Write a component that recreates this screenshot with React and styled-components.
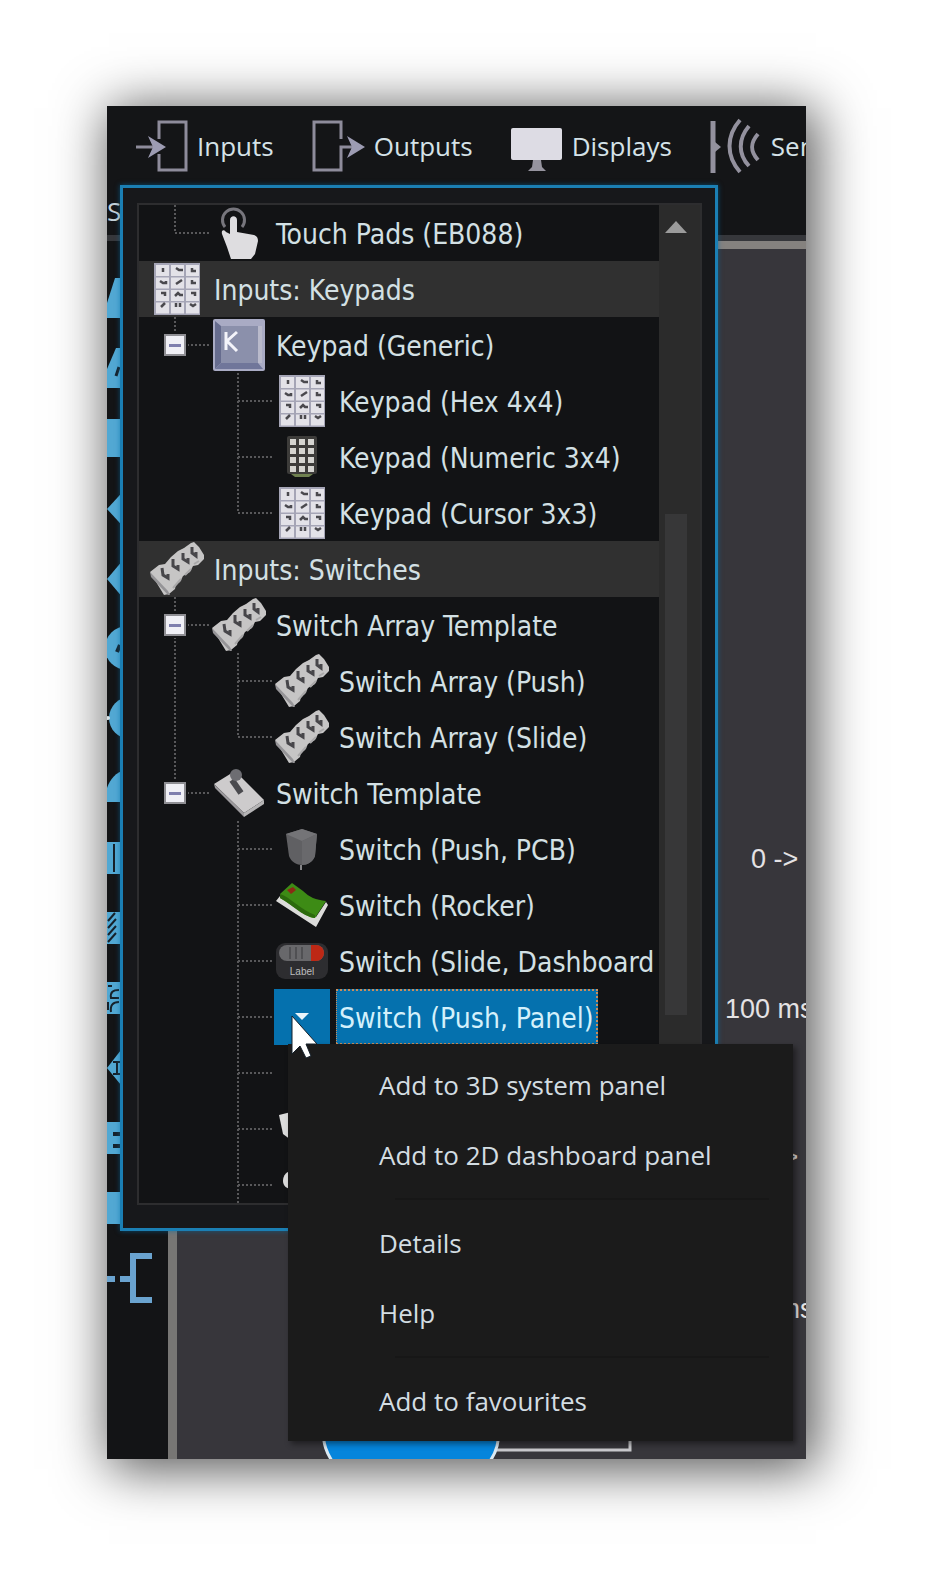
import { useState } from "react";
import styled, { createGlobalStyle, css } from "styled-components";

const GlobalStyle = createGlobalStyle`
  * {
    box-sizing: border-box;
  }

  body {
    margin: 0;
    background: #ffffff;
    font-family: "Open Sans", "Noto Sans", sans-serif;
  }

  button {
    border: none;
    padding: 0;
    background: none;
    color: inherit;
    font: inherit;
    text-align: left;
    cursor: pointer;
  }
`;

const Page = styled.main`
  padding: 106px 134px 118px 107px;
`;

const Frame = styled.div`
  position: relative;
  display: grid;
  background: #141517;
  box-shadow: 6px 6px 50px 4px rgba(0, 0, 0, 0.68);
`;

/* the window and the popup share one grid cell, the popup lies on top */
const Window = styled.div`
  grid-area: 1 / 1;
  min-width: 0;
  display: flex;
  flex-direction: column;
  overflow: hidden;
`;

const Toolbar = styled.nav`
  display: flex;
  gap: 38px;
  height: 80px;
  padding-left: 29px;
`;

const ToolbarButton = styled.button`
  display: flex;
  align-items: center;
  gap: 9px;
  flex: none;
  color: #d5e2e8;
  font-size: 26px;
  font-weight: 500;
  white-space: nowrap;

  svg {
    flex: none;
  }
`;

const TabStrip = styled.div`
  height: 49px;
  color: #c3d0d8;
  font-size: 26px;
  line-height: 50px;
`;

const Workspace = styled.div`
  flex: 1;
  display: flex;
  border-top: 6px solid #36373b;
`;

const Toolbox = styled.div`
  width: 61px;
  padding-top: 22px;
  display: flex;
  flex-direction: column;
  background: #131416;
`;

const ToolButton = styled.button`
  height: 70px;

  svg {
    display: block;
  }
`;

const Canvas = styled.div`
  position: relative;
  flex: 1;
  overflow: hidden;
  background: #37363b;
  border-top: 8px solid #85827f;
  border-left: 9px solid #777674;
`;

const CanvasLabel = styled.span`
  position: absolute;
  left: ${(p) => p.$x}px;
  top: ${(p) => p.$y}px;
  color: #e4e2e4;
  font-family: "Liberation Sans", Arial, sans-serif;
  font-size: 27px;
  line-height: 32px;
  white-space: nowrap;
`;

const CanvasShape = styled.svg`
  position: absolute;
  left: 144px;
  bottom: 0;
`;

const PopupLayer = styled.div`
  grid-area: 1 / 1;
  min-width: 0;
  z-index: 1;
  padding: 79px 88px 228px 13px;
`;

const Popup = styled.div`
  padding: 15px 13px 23px 14px;
  background: #17181b;
  border: 3px solid #1b7fb4;
  box-shadow: 0 0 5px rgba(0, 110, 170, 0.6);
`;

const TreePane = styled.div`
  display: flex;
  border: 2px solid #2d2d2f;
  background: #121315;
`;

const Tree = styled.ul`
  flex: 1;
  min-width: 0;
  max-height: 998px;
  margin: 0;
  padding: 0;
  overflow: hidden;
  list-style: none;
  color: #d3e0e4;
  font-family: "DejaVu Sans Condensed", "DejaVu Sans", sans-serif;
  font-size: 28px;
`;

const Row = styled.li`
  display: flex;
  align-items: center;
  height: 56px;
  ${(p) =>
    p.$heading &&
    css`
      padding-left: 10px;
      background: #303030;
    `}
`;

const dots = (direction) =>
  `repeating-linear-gradient(${direction}, #58585a 0 2px, transparent 2px 4px)`;

const trunkHeight = { full: "100%", half: "50%", none: "0" };

const Guide = styled.span`
  flex: none;
  display: flex;
  align-items: center;
  justify-content: flex-end;
  width: ${(p) => (p.$root ? 72 : 63)}px;
  height: 100%;
  padding-right: 25px;
  background-image: ${dots("to bottom")}, ${dots("to right")};
  background-repeat: no-repeat;
  background-position: right 35px top, right 2px center;
  background-size: 2px ${(p) => trunkHeight[p.$trunk]},
    ${(p) => (p.$branch ? "34px 2px" : "0 0")};
`;

const Expander = styled.button`
  display: flex;
  align-items: center;
  justify-content: center;
  width: 22px;
  height: 22px;
  border: 2px solid #8f8f94;
  outline: 2px solid #121315;
  background: #f0f0f6;

  &::before {
    content: "";
    width: 12px;
    height: ${(p) => (p["aria-expanded"] ? 3 : 12)}px;
    background: #7f7fae;
  }
`;

const IconCell = styled.span`
  flex: none;
  display: flex;
  align-items: center;
  justify-content: center;
  width: 56px;
  height: 56px;
  background: ${(p) => (p.$selected ? "#0571ae" : "none")};
`;

const RowLabel = styled.button`
  flex: none;
  height: 56px;
  margin-left: 6px;
  padding: 2px 2px 0;
  line-height: 52px;
  border: 2px dotted transparent;
  border-left-width: 1px;
  white-space: nowrap;
  ${(p) =>
    p.$selected &&
    css`
      background: #0571ae;
      border-color: #c98d5c;
      color: #d4f0fb;
    `}
`;

const ScrollBar = styled.div`
  width: 41px;
  display: flex;
  flex-direction: column;
  padding-left: 6px;
  background: #2b2b2b;
`;

const ScrollUp = styled.button`
  width: 22px;
  height: 309px;
  padding-top: 16px;

  svg {
    display: block;
    height: 293px;
  }
`;

const ScrollThumb = styled.div`
  width: 22px;
  height: 501px;
  background: #373738;
`;

const Menu = styled.div`
  position: absolute;
  z-index: 2;
  top: 938px;
  left: 181px;
  right: 13px;
  display: flex;
  flex-direction: column;
  padding: 6px 0 5px;
  background: #1b1b1b;
  box-shadow: 3px 3px 6px rgba(0, 0, 0, 0.45);
`;

const MenuItem = styled.button`
  height: 70px;
  padding-left: 91px;
  color: #d3dde2;
  font-size: 26px;
  font-weight: 500;
  line-height: 66px;
`;

const MenuDivider = styled.hr`
  width: 374px;
  height: 2px;
  margin: 8px 24px 8px auto;
  border: none;
  background: #171717;
`;

const Pointer = styled.svg`
  position: absolute;
  z-index: 3;
  top: 908px;
  left: 183px;
`;

function InputIcon() {
  return (
    <svg width="52" height="52" viewBox="0 0 52 52" fill="none" stroke="#8e8c9b" strokeWidth="3">
      <path d="M23 19V2h27v48H23V34" />
      <path d="M0 27h22" />
      <path d="M12 16l18 11-18 11 5-11z" fill="#9d9cb3" stroke="none" />
    </svg>
  );
}

function OutputIcon() {
  return (
    <svg width="53" height="52" viewBox="0 0 53 52" fill="none" stroke="#8e8c9b" strokeWidth="3">
      <path d="M29 19V2H2v48h27V27h12" />
      <path d="M35 16l18 11-18 11 5-11z" fill="#9d9cb3" stroke="none" />
    </svg>
  );
}

function DisplayIcon() {
  return (
    <svg width="52" height="52" viewBox="0 0 52 52">
      <rect y="8" width="51" height="32" rx="2" fill="#dddce4" />
      <path d="M22 40h8l1 7 4 4H17l4-4z" fill="#96949f" />
    </svg>
  );
}

function SensorIcon() {
  return (
    <svg width="52" height="58" viewBox="0 0 52 58" fill="none" stroke="#93919e" strokeWidth="4">
      <path d="M3 4v52" strokeWidth="5" />
      <path d="M5 25l6 5-6 5z" fill="#93919e" stroke="none" />
      <path d="M30 3C16 19 16 39 30 55M39 9C28 22 28 37 39 49M48 17c-8 9-8 17 0 26" />
    </svg>
  );
}

function TouchIcon() {
  return (
    <svg width="40" height="54" viewBox="0 0 40 54">
      <path d="M6 21a11 11 0 1 1 17 0" fill="none" stroke="#77767d" strokeWidth="3" />
      <path
        d="M11 14c0-5 7-5 7 0v12l17 3c3 1 4 3 4 6l-3 13-4 5H12L8 41 3 28c-1-4 2-5 4-2l4 2z"
        fill="#dedde0"
      />
    </svg>
  );
}

const keyMarks = [
  "M9 5v4", "M22 5l3 2h4", "M38 5v3h4",
  "M6 18l3 2h3v-2", "M22 21l3-2 3-2", "M38 17v3h4",
  "M7 30h4v3", "M21 33l3-3 2 2h3", "M37 30h4v3",
  "M7 44l4-4", "M22 40v4m4-4v4", "M36 41l3 2 3-2",
];

function KeyGridIcon() {
  return (
    <svg width="46" height="52" viewBox="0 0 46 52">
      <rect width="46" height="52" fill="#a5a5b6" />
      {keyMarks.map((mark, i) => (
        <g key={mark}>
          <rect
            x={2 + (i % 3) * 15}
            y={2 + Math.floor(i / 3) * 12.5}
            width="13"
            height="11"
            fill="#e3e2e8"
          />
          <path d={mark} fill="none" stroke="#4a494e" strokeWidth="2.5" />
        </g>
      ))}
    </svg>
  );
}

function KeyIcon() {
  return (
    <svg width="52" height="52" viewBox="0 0 52 52">
      <rect width="52" height="52" rx="2" fill="#a9abc4" />
      <path d="M2 2l6 5v37l-6 6z" fill="#666c8e" />
      <path d="M2 50l6-6h37l5 6z" fill="#70769a" />
      <path d="M8 7h37v37H8z" fill="#8b90ab" />
      <path d="M45 7h4v37h-4z" fill="#b9bacb" />
      <path d="M13 13v18M24 13l-10 9 10 10" fill="none" stroke="#f4f4fa" strokeWidth="3" />
    </svg>
  );
}

function NumPadIcon() {
  return (
    <svg width="30" height="42" viewBox="0 0 30 42">
      <rect width="30" height="38" rx="2" fill="#3d3c3a" />
      <path d="M4 38h22l-4 3H8z" fill="#6f8150" />
      {[0, 1, 2, 3].map((r) =>
        [0, 1, 2].map((c) => (
          <rect key={`${r}${c}`} x={3 + c * 9} y={3 + r * 9} width="6" height="6" fill="#d5d4d0" />
        ))
      )}
    </svg>
  );
}

function SwitchArrayIcon() {
  return (
    <svg width="54" height="56" viewBox="0 0 54 56">
      <path
        d="M0 31l9-7 6-1 6-7 7-6 6-3 7-5 3-1 5 5 5 8v4l-6 6-5 1-3 6-7 4-3 6-4 2-1 5-6 5-5 1z"
        fill="#c6c5c5"
      />
      <path d="M0 31l18 19 2 4H18L1 36z" fill="#959497" />
      <path d="M31 38l-8 9M41 28l-6 6M49 20l-5 3" stroke="#a9a8a9" strokeWidth="2" />
      <path
        d="M12 27l1 7 5 3v-4M23 18v7l5 3v-4M33 12v6l5 3v-4M42 6v6l4 3v-4"
        fill="none"
        stroke="#47464a"
        strokeWidth="3"
      />
    </svg>
  );
}

function ToggleIcon() {
  return (
    <svg width="52" height="50" viewBox="0 0 52 50">
      <path d="M1 16L22 3l29 29-20 13z" fill="#cdcbcc" />
      <path d="M1 16l30 29v4L2 20z" fill="#9c9a9d" />
      <path d="M31 45l20-13v4L31 49z" fill="#b6b5b6" />
      <path d="M19 12l9 13" stroke="#4a4a4e" strokeWidth="6" />
      <circle cx="23" cy="7" r="6" fill="#6d6d72" />
    </svg>
  );
}

function PcbIcon() {
  return (
    <svg width="34" height="42" viewBox="0 0 34 42">
      <path d="M1 6l16-5 15 5-2 22c-2 6-8 9-13 9S6 34 4 28z" fill="#606063" />
      <path d="M1 6l16-5 15 5-15 7z" fill="#747477" />
      <path d="M17 13l15-7-2 22c-2 6-8 9-13 9z" fill="#69696c" />
      <path d="M16 37v5" stroke="#858588" strokeWidth="2" />
    </svg>
  );
}

function RockerIcon() {
  return (
    <svg width="52" height="46" viewBox="0 0 52 46">
      <path d="M0 19l4-5 36 21L50 20l2 3-12 22z" fill="#dcdcda" />
      <path d="M4 12L16 1l11 8c6 6 13 9 23 10L39 36C31 36 24 28 4 16z" fill="#3d8b15" />
      <path d="M4 12c10 3 21 16 35 21v3C25 34 16 22 4 16z" fill="#2c6a0d" />
      <path d="M11 8l6-3 3 3-5 4z" fill="#8c2a15" />
    </svg>
  );
}

function SlideIcon() {
  return (
    <svg width="52" height="36" viewBox="0 0 52 36">
      <rect width="52" height="36" rx="9" fill="#2d2d30" />
      <rect x="3" y="2" width="45" height="16" rx="8" fill="#68686b" />
      <path d="M35 2h5a8 8 0 0 1 0 16h-5z" fill="#bd2815" />
      <path d="M14 4v12M20 4v12M26 4v12" stroke="#505053" strokeWidth="2" />
      <text x="26" y="32" textAnchor="middle" fill="#bdbdbd" fontSize="10" fontFamily="Liberation Sans">
        Label
      </text>
    </svg>
  );
}

function DropIcon() {
  return (
    <svg width="14" height="8" viewBox="0 0 14 8">
      <path d="M0 0h14L7 7z" fill="#e9f4fa" />
    </svg>
  );
}

function PartIcon() {
  return (
    <svg width="46" height="40" viewBox="0 0 46 40">
      <path d="M0 6l12-3 30 6-4 20-26 2-8-6z" fill="#dddddd" />
    </svg>
  );
}

function KnobIcon() {
  return (
    <svg width="38" height="28" viewBox="0 0 38 28">
      <path d="M0 10C0 4 4 0 9 0h22v18H9c-5 0-9-3-9-8z" fill="#dddddd" />
    </svg>
  );
}

const blue = "#52a8d3";
const dark = "#17212a";

const tools = [
  { name: "Input", art: <path d="M8 15h36L32 55H0V40z" fill={blue} /> },
  {
    name: "Output",
    art: (
      <>
        <path d="M9 15h36L34 55H0V36z" fill={blue} />
        <path d="M12 34L9 43" stroke={dark} strokeWidth="3" />
      </>
    ),
  },
  { name: "Delay", art: <path d="M0 16h44v38H0z" fill={blue} /> },
  { name: "Decision", art: <path d="M0 36l22-24 22 24-22 24z" fill={blue} /> },
  { name: "Switch", art: <path d="M0 36l22-26 22 26-22 26z" fill={blue} /> },
  {
    name: "Connection",
    art: (
      <>
        <circle cx="20" cy="35" r="22" fill={blue} />
        <path d="M13 32l-3 7" stroke={dark} strokeWidth="4" />
      </>
    ),
  },
  {
    name: "Goto",
    art: (
      <>
        <circle cx="23" cy="35" r="21" fill={blue} />
        <circle cx="1" cy="35" r="2" fill="#d9e3e8" />
      </>
    ),
  },
  { name: "Loop", art: <path d="M0 49V35C3 26 9 19 18 17h26v32z" fill={blue} /> },
  {
    name: "Macro",
    art: (
      <>
        <path d="M0 19h44v32H0z" fill={blue} />
        <path d="M7 21v28" stroke={dark} strokeWidth="2" />
      </>
    ),
  },
  {
    name: "Component macro",
    art: (
      <>
        <path d="M0 19h44v32H0z" fill={blue} />
        <path d="M1 28l7-8M1 35l8-9M1 42l8-9M1 49l8-9" stroke={dark} strokeWidth="2" />
      </>
    ),
  },
  {
    name: "Simulation",
    art: (
      <>
        <path d="M0 19h44v32H0z" fill={blue} />
        <path d="M12 27c-6 0-9 2-8 8h8M12 39c-6 0-9 3-8 10M1 23h4M1 39v8" fill="none" stroke={dark} strokeWidth="2" />
      </>
    ),
  },
  {
    name: "Interrupt",
    art: (
      <>
        <path d="M0 35l14-18 26 18-26 17z" fill={blue} />
        <path d="M6 29h8M10 29v12M6 41h8" stroke={dark} strokeWidth="2" />
      </>
    ),
  },
  {
    name: "Code",
    art: (
      <>
        <path d="M0 19h44v32H0z" fill={blue} />
        <path d="M6 31h12M6 43h12" stroke={dark} strokeWidth="4" />
      </>
    ),
  },
  { name: "Comment", art: <path d="M0 19h44v32H0z" fill={blue} /> },
  {
    name: "Branch",
    art: (
      <path d="M0 36h8M13 36h13M45 13H26v44h19" fill="none" stroke="#6aa3cf" strokeWidth="6" />
    ),
  },
];

const toolbarItems = [
  { label: "Inputs", icon: <InputIcon /> },
  { label: "Outputs", icon: <OutputIcon /> },
  { label: "Displays", icon: <DisplayIcon /> },
  { label: "Sensors", icon: <SensorIcon /> },
];

// guides: how far the dotted trunk runs down each level of a row
const rows = [
  { label: "Touch Pads (EB088)", icon: <TouchIcon />, guides: ["half"] },
  { label: "Inputs: Keypads", icon: <KeyGridIcon />, heading: true },
  { label: "Keypad (Generic)", icon: <KeyIcon />, guides: ["half"], expander: true },
  { label: "Keypad (Hex 4x4)", icon: <KeyGridIcon />, guides: ["none", "full"] },
  { label: "Keypad (Numeric 3x4)", icon: <NumPadIcon />, guides: ["none", "full"] },
  { label: "Keypad (Cursor 3x3)", icon: <KeyGridIcon />, guides: ["none", "half"] },
  { label: "Inputs: Switches", icon: <SwitchArrayIcon />, heading: true },
  { label: "Switch Array Template", icon: <SwitchArrayIcon />, guides: ["full"], expander: true },
  { label: "Switch Array (Push)", icon: <SwitchArrayIcon />, guides: ["full", "full"] },
  { label: "Switch Array (Slide)", icon: <SwitchArrayIcon />, guides: ["full", "half"] },
  { label: "Switch Template", icon: <ToggleIcon />, guides: ["half"], expander: true },
  { label: "Switch (Push, PCB)", icon: <PcbIcon />, guides: ["none", "full"] },
  { label: "Switch (Rocker)", icon: <RockerIcon />, guides: ["none", "full"] },
  { label: "Switch (Slide, Dashboard", icon: <SlideIcon />, guides: ["none", "full"] },
  { label: "Switch (Push, Panel)", icon: <DropIcon />, guides: ["none", "full"] },
  { label: "", icon: null, guides: ["none", "full"] },
  { label: "", icon: <PartIcon />, guides: ["none", "full"] },
  { label: "", icon: <KnobIcon />, guides: ["none", "full"] },
];

const menuGroups = [
  ["Add to 3D system panel", "Add to 2D dashboard panel"],
  ["Details", "Help"],
  ["Add to favourites"],
];

function TreeRow({ row, selected, onSelect }) {
  const guides = row.guides || [];
  return (
    <Row $heading={row.heading}>
      {guides.map((trunk, i) => {
        const last = i === guides.length - 1;
        return (
          <Guide key={i} $root={i === 0} $trunk={trunk} $branch={last}>
            {last && row.expander && <Expander aria-expanded={true} aria-label={`Collapse ${row.label}`} />}
          </Guide>
        );
      })}
      <IconCell $selected={selected}>{row.icon}</IconCell>
      {row.label && (
        <RowLabel $selected={selected} onClick={onSelect}>
          {row.label}
        </RowLabel>
      )}
    </Row>
  );
}

export default function App() {
  const [selected, setSelected] = useState(14);

  return (
    <Page>
      <GlobalStyle />
      <Frame>
        <Window>
          <Toolbar>
            {toolbarItems.map((item) => (
              <ToolbarButton key={item.label}>
                {item.icon}
                {item.label}
              </ToolbarButton>
            ))}
          </Toolbar>
          <TabStrip>S</TabStrip>
          <Workspace>
            <Toolbox>
              {tools.map((tool) => (
                <ToolButton key={tool.name} aria-label={tool.name}>
                  <svg width="50" height="70" viewBox="0 0 50 70">
                    {tool.art}
                  </svg>
                </ToolButton>
              ))}
            </Toolbox>
            <Canvas>
              <CanvasLabel $x={574} $y={594}>0 -&gt;</CanvasLabel>
              <CanvasLabel $x={548} $y={744}>100 ms</CanvasLabel>
              <CanvasLabel $x={574} $y={892}>0 -&gt;</CanvasLabel>
              <CanvasLabel $x={548} $y={1044}>100 ms</CanvasLabel>
              <CanvasShape width="312" height="40" viewBox="0 0 312 40">
                <path d="M170 31h139V10" fill="none" stroke="#c9c9cd" strokeWidth="3" />
                <path d="M2 10c0 16 4 24 9 32h158c6-8 9-18 9-32z" fill="#0585dc" stroke="#dbe9f2" strokeWidth="3" />
              </CanvasShape>
            </Canvas>
          </Workspace>
        </Window>

        <PopupLayer>
          <Popup>
            <TreePane>
              <Tree>
                {rows.map((row, i) => (
                  <TreeRow key={i} row={row} selected={i === selected} onSelect={() => setSelected(i)} />
                ))}
              </Tree>
              <ScrollBar>
                <ScrollUp aria-label="Scroll up">
                  <svg width="22" viewBox="0 0 22 293">
                    <path d="M11 0l11 12H0z" fill="#9b9b9b" />
                  </svg>
                </ScrollUp>
                <ScrollThumb />
              </ScrollBar>
            </TreePane>
          </Popup>
        </PopupLayer>

        <Menu>
          {menuGroups.map((group, i) => [
            i > 0 && <MenuDivider key={`divider${i}`} />,
            ...group.map((label) => <MenuItem key={label}>{label}</MenuItem>),
          ])}
        </Menu>

        <Pointer width="28" height="46" viewBox="0 0 28 46">
          <path d="M2 2v38l8-8 6 12 5-2-5-12h11z" fill="#ffffff" stroke="#15202a" strokeWidth="1" />
        </Pointer>
      </Frame>
    </Page>
  );
}
